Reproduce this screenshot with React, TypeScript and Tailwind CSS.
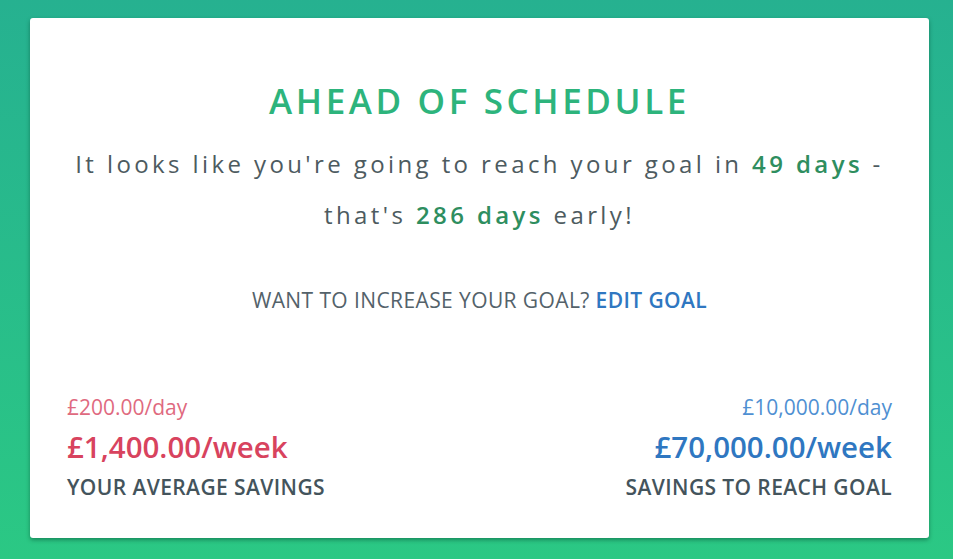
import React from 'react';

const Stat: React.FC<{ day: string; week: string; label: string; align: 'left' | 'right'; tone: 'red' | 'blue' }> = ({ day, week, label, align, tone }) => {
  const right = align === 'right';
  return (
    <div className={right ? 'flex flex-col items-end text-right' : 'flex flex-col items-start'}>
      <div className={tone === 'red' ? 'text-[21px] leading-[28px] font-normal text-[#df6a80]' : 'text-[21px] leading-[28px] font-normal text-[#4f90d2]'}>
        {day}
      </div>
      <div className={tone === 'red' ? 'mt-[6px] text-[29.5px] leading-[40px] font-semibold text-[#d8435e]' : 'mt-[6px] text-[29.5px] leading-[40px] font-semibold text-[#2f77c1]'}>
        {week}
      </div>
      <div className="mt-[6px] text-[21px] leading-[28px] font-semibold tracking-[0.4px] text-[#44545c]">{label}</div>
    </div>
  );
};

const App: React.FC = () => {
  return (
    <div className="min-h-[559px] w-full bg-gradient-to-b from-[#26b190] to-[#2bc884] pl-[30px] pr-[24px] pt-[18px] pb-[21px] font-['Open_Sans',sans-serif]">
      <div className="flex h-[520px] flex-col rounded-[3px] bg-white px-[37px] shadow-[0_2px_4px_rgba(0,60,40,0.45)]">
        {/* Heading */}
        <h1 className="mt-[60px] text-center text-[35px] leading-[46px] font-semibold tracking-[3.6px] text-[#2db47c]">
          AHEAD OF SCHEDULE
        </h1>

        <p className="mt-[14px] text-center text-[24px] leading-[51px] tracking-[3.4px] text-[#4d5b60]">
          It looks like you're going to reach your goal in{' '}
          <span className="font-semibold text-[#2e8e5f]">49 days</span> -
          <br />
          that's <span className="font-semibold text-[#2e8e5f]">286 days</span> early!
        </p>

        <div className="mt-[46px] text-center text-[21px] leading-[28px] tracking-[0.4px] text-[#54626a]">
          WANT TO INCREASE YOUR GOAL? <span className="font-semibold text-[#2f77c1]">EDIT GOAL</span>
        </div>

        {/* Stats */}
        <div className="mt-[79px] flex justify-between">
          <Stat day="£200.00/day" week="£1,400.00/week" label="YOUR AVERAGE SAVINGS" align="left" tone="red" />
          <Stat day="£10,000.00/day" week="£70,000.00/week" label="SAVINGS TO REACH GOAL" align="right" tone="blue" />
        </div>
      </div>
    </div>
  );
};

export default App;
